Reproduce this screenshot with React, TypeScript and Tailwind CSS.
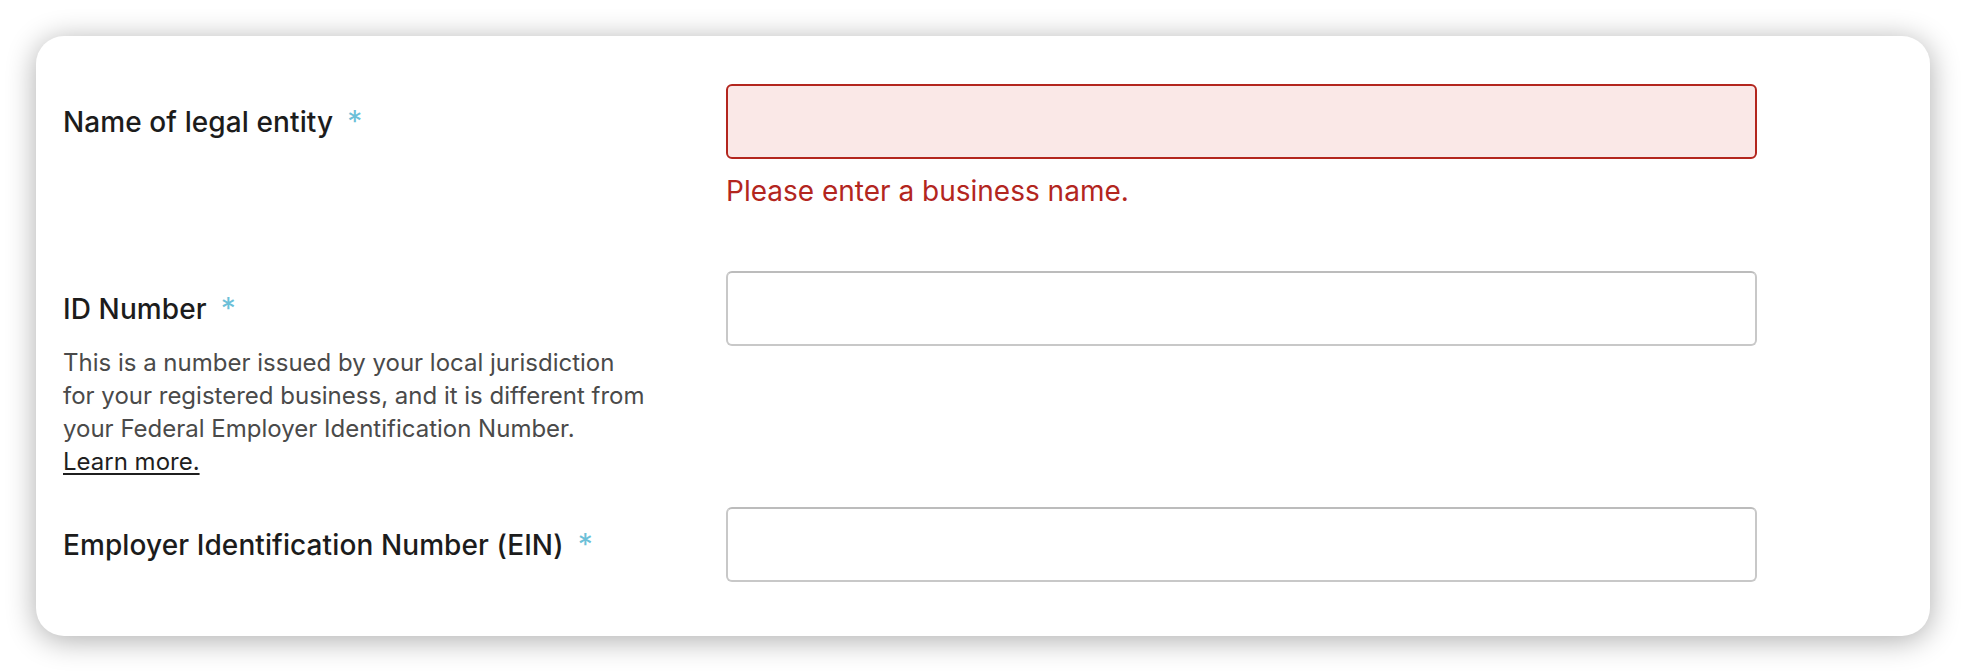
import React from "react";

const font = { fontFamily: "Inter, 'Noto Sans', sans-serif" };

function Label({ text }: { text: string }) {
  return (
    <div className="flex h-[75px] items-center">
      <span className="text-[28px] leading-[34px] font-medium tracking-[0.1px] text-[#1c1c1c] whitespace-nowrap">
        {text}
        <span className="ml-[14px] text-[30px] font-normal text-[#6cc0d8]">*</span>
      </span>
    </div>
  );
}

function Input({ error = false }: { error?: boolean }) {
  return (
    <input
      type="text"
      className={
        error
          ? "block h-[75px] w-[1031px] rounded-[6px] border-2 border-[#b3261e] bg-[#fae8e7] px-4 outline-none"
          : "block h-[75px] w-[1031px] rounded-[6px] border-2 border-[#c8c8c8] border-t-[#bcbcbc] bg-white px-4 outline-none"
      }
    />
  );
}

export default function App() {
  return (
    <div className="w-[1966px] h-[672px] bg-white p-[36px]" style={font}>
      <div className="h-[600px] w-full rounded-[28px] bg-white shadow-[0_4px_30px_rgba(0,0,0,0.33)] pl-[27px] pt-[48px]">
        {/* Row 1 */}
        <div className="flex h-[187px]">
          <div className="w-[663px]">
            <Label text="Name of legal entity" />
          </div>
          <div className="w-[1031px]">
            <Input error />
            <div className="mt-[15px] text-[28px] leading-[34px] text-[#b3261e]">
              Please enter a business name.
            </div>
          </div>
        </div>
        {/* Row 2 */}
        <div className="flex h-[236px]">
          <div className="w-[663px]">
            <Label text="ID Number" />
            <p className="text-[24px] leading-[33px] text-[#4a4a4a]">
              This is a number issued by your local jurisdiction
              <br />
              for your registered business, and it is different from
              <br />
              your Federal Employer Identification Number.
              <br />
              <a href="#" className="text-[#1f1f1f] underline underline-offset-[3px]">
                Learn more.
              </a>
            </p>
          </div>
          <div className="w-[1031px]">
            <Input />
          </div>
        </div>
        {/* Row 3 */}
        <div className="flex">
          <div className="w-[663px]">
            <Label text="Employer Identification Number (EIN)" />
          </div>
          <div className="w-[1031px]">
            <Input />
          </div>
        </div>
      </div>
    </div>
  );
}
